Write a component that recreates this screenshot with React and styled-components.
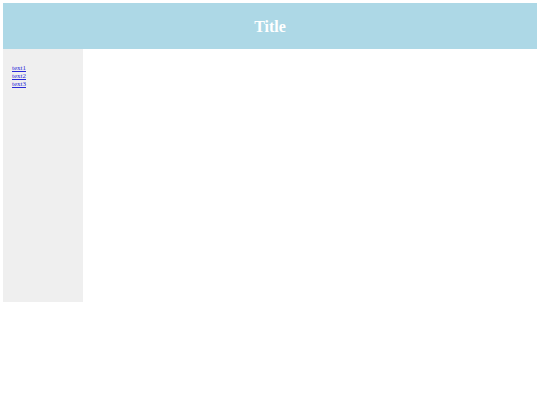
import React from 'react';
import styled, { createGlobalStyle } from 'styled-components';

const GlobalStyle = createGlobalStyle`
  body {
    margin: 3px;
    font-family: "Liberation Serif", "Times New Roman", serif;
    background: #fff;
  }
`;

const Header = styled.header`
  height: 46px;
  background: #add8e6;
  display: flex;
  align-items: center;
  justify-content: center;
`;

const Title = styled.h1`
  margin: 1px 0 0;
  color: #fff;
  font-size: 16px;
  font-weight: bold;
`;

const Body = styled.div`
  display: flex;
`;

const Sidebar = styled.nav`
  width: 80px;
  height: 253px;
  background: #efefef;
  padding: 16px 0 0 9px;
  box-sizing: border-box;
`;

const NavLink = styled.a`
  display: block;
  font-size: 7px;
  line-height: 7.8px;
  color: #2a2ad8;
  text-decoration: underline;
`;

const Main = styled.main`
  flex: 1;
`;

const links = ['text1', 'text2', 'text3'];

const App = () => {
  return (
    <>
      <GlobalStyle />
      <Header>
        <Title>Title</Title>
      </Header>
      <Body>
        <Sidebar>
          {links.map((link) => (
            <NavLink key={link} href="#">
              {link}
            </NavLink>
          ))}
        </Sidebar>
        <Main />
      </Body>
    </>
  );
};

export default App;
